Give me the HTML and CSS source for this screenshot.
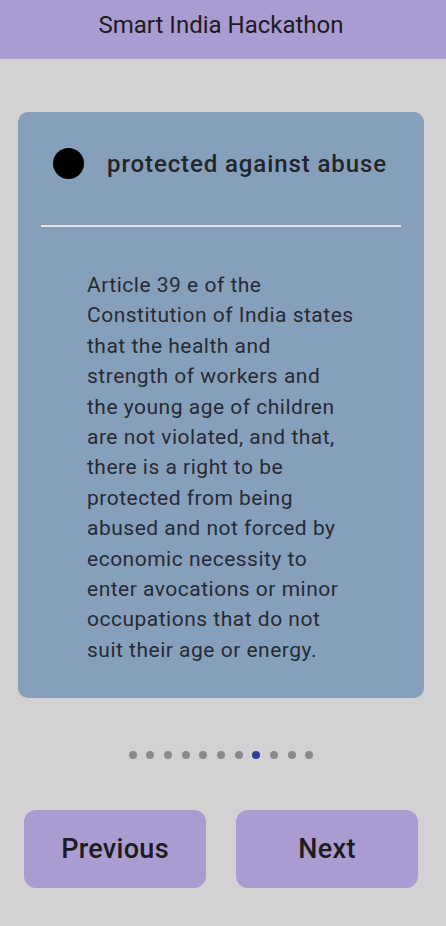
FILE: index.html
```html
<!DOCTYPE html>
<html>
<head>
<meta charset="utf-8">
<link rel="stylesheet" href="styles.css">
</head>
<body>
<header class="appbar"><h1 class="title">Smart India Hackathon</h1></header>
<main class="content">
  <section class="card">
    <div class="card-head">
      <span class="bullet"></span>
      <h2 class="card-title">protected against abuse</h2>
    </div>
    <hr class="divider">
    <p class="card-body">Article 39 e of the Constitution of India states that the health and strength of workers and the young age of children are not violated, and that, there is a right to be protected from being abused and not forced by economic necessity to enter avocations or minor occupations that do not suit their age or energy.</p>
  </section>
  <div class="dots">
    <span class="dot"></span><span class="dot"></span><span class="dot"></span><span class="dot"></span><span class="dot"></span><span class="dot"></span><span class="dot"></span><span class="dot active"></span><span class="dot"></span><span class="dot"></span><span class="dot"></span>
  </div>
  <div class="buttons">
    <button class="btn">Previous</button>
    <button class="btn">Next</button>
  </div>
</main>
</body>
</html>
```
FILE: styles.css
```css
html, body {
  margin: 0;
  padding: 0;
  background: #d3d1d4;
  font-family: Roboto, "Noto Sans", sans-serif;
}
.appbar {
  height: 59px;
  background: #aa9bd1;
  display: flex;
  align-items: center;
  justify-content: center;
}
.title {
  margin: 0;
  font-size: 24px;
  font-weight: 400;
  color: #1d1b20;
  position: relative;
  top: -5px;
  left: -2px;
}
.content {
  padding: 53px 22px 0 18px;
}
.card {
  width: 406px;
  height: 586px;
  box-sizing: border-box;
  background: #86a0bb;
  border-radius: 10px;
  padding: 36px 23px 0 23px;
}
.card-head {
  display: flex;
  align-items: center;
  padding-left: 12px;
  gap: 23px;
}
.bullet {
  width: 31px;
  height: 31px;
  border-radius: 50%;
  background: #000;
  flex: none;
}
.card-title {
  margin: 0;
  font-size: 24px;
  font-weight: 500;
  letter-spacing: 0.9px;
  color: #22252c;
}
.divider {
  margin: 46px 0 0 0;
  border: none;
  height: 2px;
  background: #e2e3ea;
}
.card-body {
  margin: 43px 0 0 46px;
  width: 267px;
  font-size: 21px;
  line-height: 30.4px;
  letter-spacing: 0.5px;
  color: #272a33;
}
.dots {
  display: flex;
  justify-content: center;
  gap: 9.7px;
  margin-top: 53px;
}
.dot {
  width: 8px;
  height: 8px;
  border-radius: 50%;
  background: #8a898c;
}
.dot.active {
  background: #2e3f99;
}
.buttons {
  display: flex;
  gap: 30px;
  margin-top: 51px;
  padding-left: 6px;
}
.btn {
  width: 182px;
  height: 78px;
  border: none;
  border-radius: 12px;
  background: #aa9bd1;
  font-family: Roboto, "Noto Sans", sans-serif;
  font-size: 27px;
  font-weight: 500;
  letter-spacing: 0.3px;
  color: #1d1b20;
}
```
